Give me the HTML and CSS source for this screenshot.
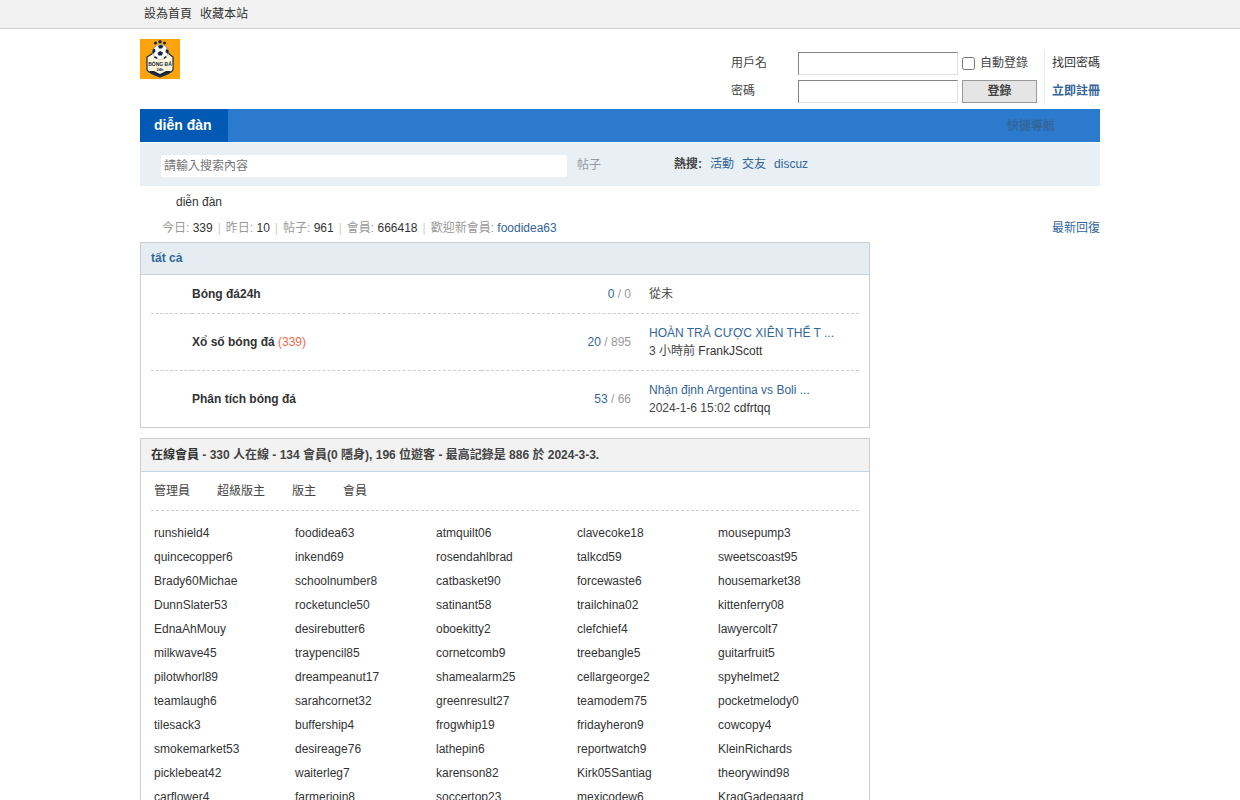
FILE: index.html
```html
<!DOCTYPE html>
<html lang="zh-Hant">
<head>
<meta charset="utf-8">
<meta name="viewport" content="width=device-width, initial-scale=1">
<title>diễn đàn</title>
<link rel="stylesheet" href="styles.css">
</head>
<body>
<div class="topbar">
  <div class="wrap topbar-links"><a href="#">設為首頁</a><a href="#">收藏本站</a></div>
</div>
<div class="wrap">
  <header class="header">
    <a class="logo" href="#" aria-label="Bóng Đá 24h">
      <svg viewBox="0 0 40 40" width="40" height="40">
        <rect width="40" height="40" fill="#ffa30a"/>
        <g fill="#14263f"><circle cx="15.500" cy="4" r="1.500"/><circle cx="20" cy="2.800" r="1.700"/><circle cx="24.500" cy="4" r="1.500"/></g>
        <path d="M7 18 12 15Q13 7 20.500 6Q28 7 29 15L33 18V31Q31 34 20 38Q9 34 7 31Z" fill="#fff6dc" stroke="#14263f" stroke-width="1.200"/>
        <path d="M9 32H14L20 35 26 32H31Q29 35 20 37.500Q11 35 9 32Z" fill="#14263f"/>
        <circle cx="20.500" cy="13" r="7.600" fill="#fff" stroke="#9cabb7" stroke-width=".6"/>
        <path d="M18 7Q20.500 5 23.500 7L22 9.500H19ZM17.500 14 20 12 23 13.500 22 16.500H18.500ZM13 10 15 10 15.500 12.500 13 15ZM26 10 28 11V15L25.500 13ZM15 17 17.500 18.500 17 20 14 18.500ZM23.500 18.500 26 17 26.500 18.500 24 20Z" fill="#14263f"/>
        <text class="logo-name" x="20" y="27" text-anchor="middle">BÓNG ĐÁ</text>
        <text class="logo-sub" x="20" y="32" text-anchor="middle">24h</text>
      </svg>
    </a>
    <form class="login">
      <div class="login-fields">
        <label for="user">用戶名</label>
        <input class="field" id="user" type="text">
        <span class="auto"><input class="check" id="auto" type="checkbox"><label for="auto">自動登錄</label></span>
        <label for="pass">密碼</label>
        <input class="field" id="pass" type="password">
        <button class="login-btn" type="button">登錄</button>
      </div>
      <div class="login-links"><a href="#">找回密碼</a><a class="register" href="#">立即註冊</a></div>
    </form>
  </header>
  <nav class="nav"><a class="nav-home" href="#">diễn đàn</a><a class="nav-quick" href="#">快捷導航</a></nav>
  <form class="search">
    <input class="search-input" type="text" placeholder="請輸入搜索內容" aria-label="請輸入搜索內容">
    <a class="search-type" href="#">帖子</a>
    <div class="hot"><strong>熱搜:</strong><a href="#">活動</a><a href="#">交友</a><a href="#">discuz</a></div>
  </form>
  <div class="crumb"><a href="#">diễn đàn</a></div>
  <div class="stats">
    <p class="stats-list">今日: <em>339</em><i>|</i>昨日: <em>10</em><i>|</i>帖子: <em>961</em><i>|</i>會員: <em>666418</em><i>|</i>歡迎新會員: <a class="blue" href="#">foodidea63</a></p>
    <a class="blue" href="#">最新回復</a>
  </div>
  <div class="columns">
    <main class="main">
      <section class="box">
        <h2 class="box-head forum-head"><a href="#">tất cả</a></h2>
        <table class="forums">
          <colgroup><col class="col-icon"><col><col class="col-count"><col class="col-last"></colgroup>
          <tr><td></td><td><a class="forum" href="#">Bóng đá24h</a></td><td class="count"><b>0</b> / 0</td><td class="last">從未</td></tr>
          <tr><td></td><td><a class="forum" href="#">Xổ số bóng đá</a> <span class="new">(339)</span></td><td class="count"><b>20</b> / 895</td><td class="last"><a class="blue" href="#">HOÀN TRẢ CƯỢC XIÊN THỂ T ...</a><br>3 小時前 <a href="#">FrankJScott</a></td></tr>
          <tr><td></td><td><a class="forum" href="#">Phân tích bóng đá</a></td><td class="count"><b>53</b> / 66</td><td class="last"><a class="blue" href="#">Nhận định Argentina vs Boli ...</a><br>2024-1-6 15:02 <a href="#">cdfrtqq</a></td></tr>
        </table>
      </section>
      <section class="box">
        <h2 class="box-head online-head"><a href="#">在線會員</a> - 330 人在線 - 134 會員(0 隱身), 196 位遊客 - 最高記錄是 886 於 2024-3-3.</h2>
        <div class="online">
          <div class="legend"><span>管理員</span><span>超級版主</span><span>版主</span><span>會員</span></div>
          <ul class="members">
            <li><a href="#">runshield4</a></li><li><a href="#">foodidea63</a></li><li><a href="#">atmquilt06</a></li><li><a href="#">clavecoke18</a></li><li><a href="#">mousepump3</a></li>
            <li><a href="#">quincecopper6</a></li><li><a href="#">inkend69</a></li><li><a href="#">rosendahlbrad</a></li><li><a href="#">talkcd59</a></li><li><a href="#">sweetscoast95</a></li>
            <li><a href="#">Brady60Michae</a></li><li><a href="#">schoolnumber8</a></li><li><a href="#">catbasket90</a></li><li><a href="#">forcewaste6</a></li><li><a href="#">housemarket38</a></li>
            <li><a href="#">DunnSlater53</a></li><li><a href="#">rocketuncle50</a></li><li><a href="#">satinant58</a></li><li><a href="#">trailchina02</a></li><li><a href="#">kittenferry08</a></li>
            <li><a href="#">EdnaAhMouy</a></li><li><a href="#">desirebutter6</a></li><li><a href="#">oboekitty2</a></li><li><a href="#">clefchief4</a></li><li><a href="#">lawyercolt7</a></li>
            <li><a href="#">milkwave45</a></li><li><a href="#">traypencil85</a></li><li><a href="#">cornetcomb9</a></li><li><a href="#">treebangle5</a></li><li><a href="#">guitarfruit5</a></li>
            <li><a href="#">pilotwhorl89</a></li><li><a href="#">dreampeanut17</a></li><li><a href="#">shamealarm25</a></li><li><a href="#">cellargeorge2</a></li><li><a href="#">spyhelmet2</a></li>
            <li><a href="#">teamlaugh6</a></li><li><a href="#">sarahcornet32</a></li><li><a href="#">greenresult27</a></li><li><a href="#">teamodem75</a></li><li><a href="#">pocketmelody0</a></li>
            <li><a href="#">tilesack3</a></li><li><a href="#">buffership4</a></li><li><a href="#">frogwhip19</a></li><li><a href="#">fridayheron9</a></li><li><a href="#">cowcopy4</a></li>
            <li><a href="#">smokemarket53</a></li><li><a href="#">desireage76</a></li><li><a href="#">lathepin6</a></li><li><a href="#">reportwatch9</a></li><li><a href="#">KleinRichards</a></li>
            <li><a href="#">picklebeat42</a></li><li><a href="#">waiterleg7</a></li><li><a href="#">karenson82</a></li><li><a href="#">Kirk05Santiag</a></li><li><a href="#">theorywind98</a></li>
            <li><a href="#">carflower4</a></li><li><a href="#">farmerjoin8</a></li><li><a href="#">soccertop23</a></li><li><a href="#">mexicodew6</a></li><li><a href="#">KragGadegaard</a></li>
          </ul>
        </div>
      </section>
    </main>
  </div>
</div>
</body>
</html>
```
FILE: styles.css
```css
* { box-sizing: border-box; }
body {
  margin: 0;
  background: #fff;
  color: #444;
  font: 12px/18px "Liberation Sans", "Noto Sans CJK SC", sans-serif;
}
a { color: #333; text-decoration: none; }
a:hover { text-decoration: underline; }
input, button { font: inherit; color: inherit; }
.blue { color: #369; }
.wrap { max-width: 960px; margin: 0 auto; }

.topbar { background: #f2f2f2; border-bottom: 1px solid #cdcdcd; }
.topbar-links { display: flex; gap: 8px; padding: 5px 4px; }

.header { display: flex; justify-content: space-between; height: 80px; padding-top: 10px; }
.logo { height: 40px; }
.logo svg { display: block; }
.logo-name { font: bold 5px "Liberation Sans", sans-serif; fill: #14263f; stroke: #fff6dc; stroke-width: 1px; paint-order: stroke; }
.logo-sub { font: bold 4px "Liberation Sans", sans-serif; fill: #14263f; }

.login { display: flex; padding-top: 11px; }
.login-fields {
  display: grid;
  grid-template-columns: 63px 160px 75px;
  grid-template-rows: 23px 23px;
  gap: 5px 4px;
  align-content: start;
  padding: 2px 7px 0 0;
}
.login-fields > label { line-height: 22px; }
.field {
  width: 100%;
  padding: 2px 4px;
  border: 1px solid;
  border-color: #848484 #e0e0e0 #e0e0e0 #848484;
  background: #fff;
}
.auto { display: flex; align-items: center; gap: 5px; line-height: 20px; }
.auto label { padding-bottom: 1px; }
.check { width: 13px; height: 13px; margin: 0; }
.login-btn {
  padding: 0 0 1px;
  border: 1px solid #999;
  border-radius: 0;
  background: #e5e5e5;
  font-weight: bold;
}
.login-links {
  display: flex;
  flex-direction: column;
  gap: 6px;
  height: 55px;
  padding: 2px 0 0 7px;
  border-left: 1px solid #e5edf2;
  line-height: 22px;
}
.login-links .register { color: #369; font-weight: bold; }

.nav { display: flex; justify-content: space-between; height: 33px; background: #2b7acd; }
.nav-home { padding: 0 16px 0 14px; background: #005ab4; color: #fff; font-size: 14px; font-weight: bold; line-height: 32px; }
.nav-quick { padding-right: 45px; color: #369; font-weight: bold; line-height: 34px; }

.search { display: flex; align-items: flex-start; margin-top: 1px; padding: 12px 21px 9px; background: #e8eff5; }
.search-input { width: 406px; height: 22px; padding: 0 3px; border: 0; background: #fff; }
.search-type { margin-left: 10px; color: #999; line-height: 21px; }
.hot { display: flex; gap: 8px; margin-left: 73px; }
.hot a { color: #369; }

.crumb { padding: 7px 36px 8px; }
.stats { display: flex; justify-content: space-between; padding: 0 0 5px 22px; }
.stats-list { margin: 0; color: #999; }
.stats-list em { color: #333; font-style: normal; }
.stats-list i { padding: 0 5px; color: #ccc; font-style: normal; }

.columns { display: grid; grid-template-columns: minmax(0, 730px) minmax(0, 1fr); }
.box { margin-bottom: 10px; border: 1px solid #cdcdcd; background: #fff; }
.box-head { margin: 0; padding: 0 10px; border-bottom: 1px solid #c2d5e3; font-size: 12px; }
.forum-head { background: #e5edf2; line-height: 31px; }
.forum-head a { color: #369; }
.online-head { background: #f2f2f2; line-height: 32px; }

.forums { width: calc(100% - 20px); margin: 0 10px; border-collapse: separate; border-spacing: 0; table-layout: fixed; }
.forums td { padding: 10px 0; border-bottom: 1px dashed #cdcdcd; }
.forums tr:last-child td { border-bottom: 0; }
.col-icon { width: 41px; }
.col-count { width: 150px; }
.col-last { width: 228px; }
.forum { font-weight: bold; }
.new { color: #f26c4f; }
.count { color: #999; text-align: right; }
.count b { color: #369; font-weight: normal; }
.forums .last { padding-left: 18px; }

.online { padding: 0 10px 10px; }
.legend { display: flex; gap: 27px; padding: 0 3px; border-bottom: 1px dashed #cdcdcd; line-height: 38px; }
.members { display: grid; grid-template-columns: repeat(5, 1fr); margin: 0; padding: 10px 0 0 3px; list-style: none; line-height: 24px; }
```
